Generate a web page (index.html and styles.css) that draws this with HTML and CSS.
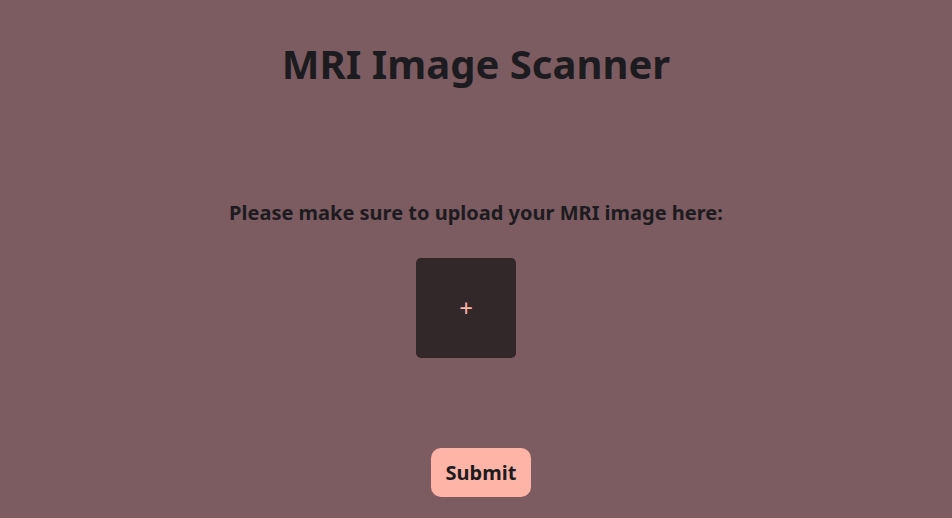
FILE: index.html
```html
<!DOCTYPE html>
<html lang="en">
<head>
<meta charset="utf-8">
<title>MRI Image Scanner</title>
<link rel="stylesheet" href="styles.css">
</head>
<body>
<main class="page">
  <h1 class="title">MRI Image Scanner</h1>
  <p class="prompt">Please make sure to upload your MRI image here:</p>
  <div class="upload-row">
    <label class="upload-box"><span class="plus">+</span></label>
  </div>
  <div class="submit-row">
    <button class="submit" type="button">Submit</button>
  </div>
</main>
</body>
</html>
```

FILE: styles.css
```css
html, body {
  margin: 0;
  padding: 0;
  background: #7d5c61;
}
body {
  font-family: "Noto Sans", "DejaVu Sans", sans-serif;
  color: #1c1b1f;
  min-height: 518px;
}
.page {
  display: flex;
  flex-direction: column;
  align-items: center;
  padding-top: 37px;
}
.title {
  margin: 0;
  font-size: 40px;
  line-height: 54px;
  font-weight: 700;
  text-align: center;
}
.prompt {
  margin: 108px 0 0;
  font-size: 20px;
  line-height: 28px;
  font-weight: 700;
  text-align: center;
}
.upload-row {
  margin-top: 31px;
  padding-right: 20px;
  display: flex;
  justify-content: center;
}
.upload-box {
  width: 100px;
  height: 100px;
  border-radius: 5px;
  background: #322729;
  display: flex;
  align-items: center;
  justify-content: center;
  cursor: pointer;
}
.plus {
  color: #ffb4a8;
  font-size: 24px;
  line-height: 24px;
  font-weight: 400;
}
.submit-row {
  margin-top: 90px;
  padding-left: 10px;
  display: flex;
  justify-content: center;
}
.submit {
  width: 100px;
  height: 49px;
  border: none;
  border-radius: 10px;
  background: #ffb4a8;
  color: #1c1b1f;
  font-family: "Noto Sans", "DejaVu Sans", sans-serif;
  font-size: 20px;
  font-weight: 700;
  padding: 0;
  cursor: pointer;
}
```
